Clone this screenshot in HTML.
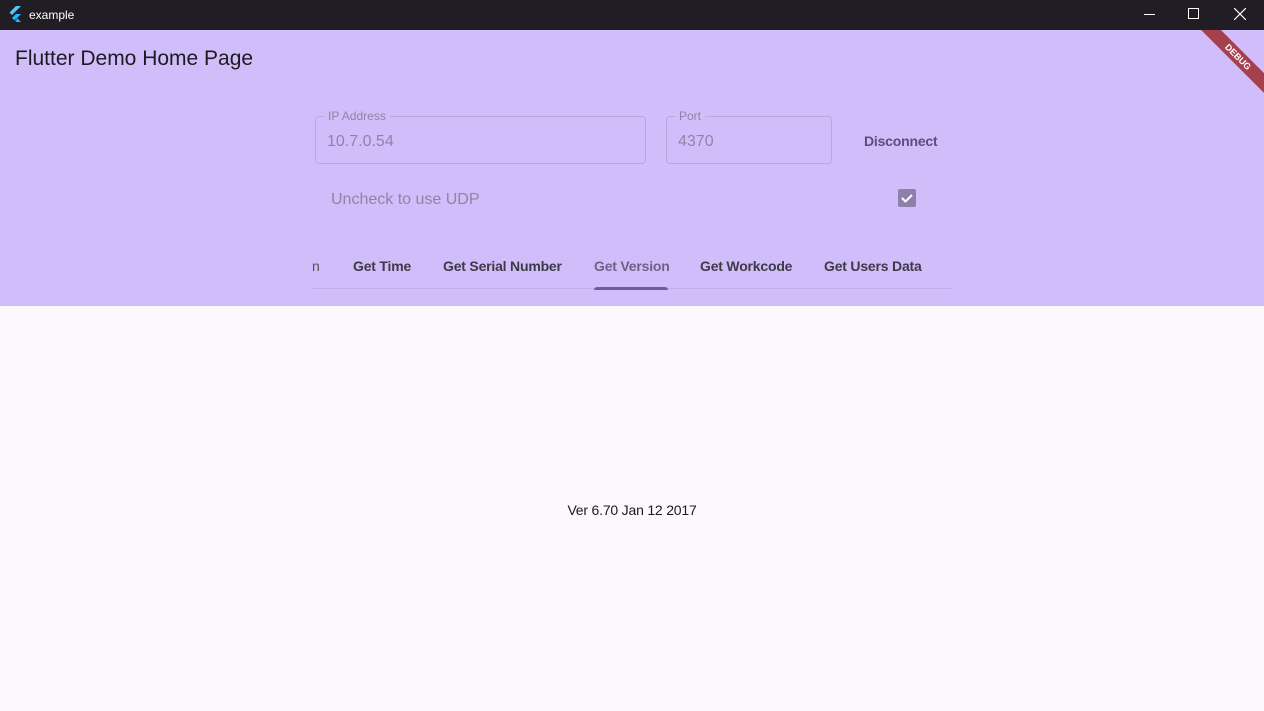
<!DOCTYPE html>
<html><head><meta charset="utf-8"><style>
*{margin:0;padding:0;box-sizing:border-box}
body{width:1264px;height:711px;overflow:hidden;font-family:"Liberation Sans",sans-serif;background:#fdf7fe;position:relative}
.tb{position:absolute;left:0;top:0;width:1264px;height:30px;background:#201e24;color:#fff;font-size:12px}
.app{position:absolute;left:0;top:30px;width:1264px;height:276px;background:#d2bdfb;overflow:hidden}
.abs{position:absolute}
.field{position:absolute;border:1px solid #bba8e0;border-radius:4px;height:48px}
.lbl{position:absolute;top:-8px;left:8px;padding:0 4px;background:#d2bdfb;font-size:12px;color:#8f84a4}
.val{position:absolute;left:11px;top:16px;font-size:16px;color:#8f84a4}
.tab{position:absolute;top:228px;font-size:14px;font-weight:bold;color:#3e3a46;letter-spacing:-0.2px}
</style></head><body>
<div class="tb">
<svg class="abs" style="left:8px;top:6px" width="14" height="17" viewBox="0 0 14 17"><path d="M8 0h5L4 9 1.5 6.5z" fill="#54c5f8"/><path d="M8 8h5l-4 4 4 4H8l-4-4z" fill="#29b6f6"/><path d="M6 14l3-2 -1 4z" fill="#01579b"/></svg>
<span class="abs" style="left:29px;top:8px">example</span>
<div class="abs" style="left:1144px;top:14px;width:11px;height:1px;background:#fff"></div>
<div class="abs" style="left:1188px;top:8px;width:11px;height:11px;border:1px solid #fff"></div>
<svg class="abs" style="left:1234px;top:8px" width="12" height="12"><path d="M0 0L12 12M12 0L0 12" stroke="#fff" stroke-width="1.2"/></svg>
</div>
<div class="app">
<div class="abs" style="left:15px;top:17px;font-size:21px;color:#1d1b20">Flutter Demo Home Page</div>
<div class="abs" style="left:1178px;top:20px;width:120px;height:14px;background:#a5404f;transform:rotate(45deg);color:#fff;font-size:9px;font-weight:bold;text-align:center;line-height:14px">DEBUG</div>
<div class="field" style="left:315px;top:86px;width:331px"><span class="lbl">IP Address</span><span class="val">10.7.0.54</span></div>
<div class="field" style="left:666px;top:86px;width:166px"><span class="lbl">Port</span><span class="val">4370</span></div>
<div class="abs" style="left:864px;top:103px;font-size:14px;font-weight:bold;color:#5c4d7d;letter-spacing:-0.2px">Disconnect</div>
<div class="abs" style="left:331px;top:161px;font-size:16px;color:#8f84a4">Uncheck to use UDP</div>
<div class="abs" style="left:898px;top:159px;width:18px;height:18px;background:#8f7fab;border-radius:2px"><svg width="18" height="18"><path d="M4 9l3.5 3.5L14 6" stroke="#fff" stroke-width="2" fill="none"/></svg></div>
<div class="tab" style="left:312px;width:9px;overflow:hidden;font-weight:normal;color:#555">n</div>
<div class="tab" style="left:353px">Get Time</div>
<div class="tab" style="left:443px">Get Serial Number</div>
<div class="tab" style="left:594px;color:#6e6284">Get Version</div>
<div class="tab" style="left:700px">Get Workcode</div>
<div class="tab" style="left:824px">Get Users Data</div>
<div class="abs" style="left:312px;top:258px;width:640px;height:1px;background:#c2afe6"></div>
<div class="abs" style="left:594px;top:257px;width:74px;height:3px;background:#6e5a9c;border-radius:3px 3px 0 0"></div>
</div>
<div class="abs" style="left:0;top:502px;width:1264px;text-align:center;font-size:14px;color:#1d1b20;letter-spacing:-0.2px">Ver 6.70 Jan 12 2017</div>
</body></html>
